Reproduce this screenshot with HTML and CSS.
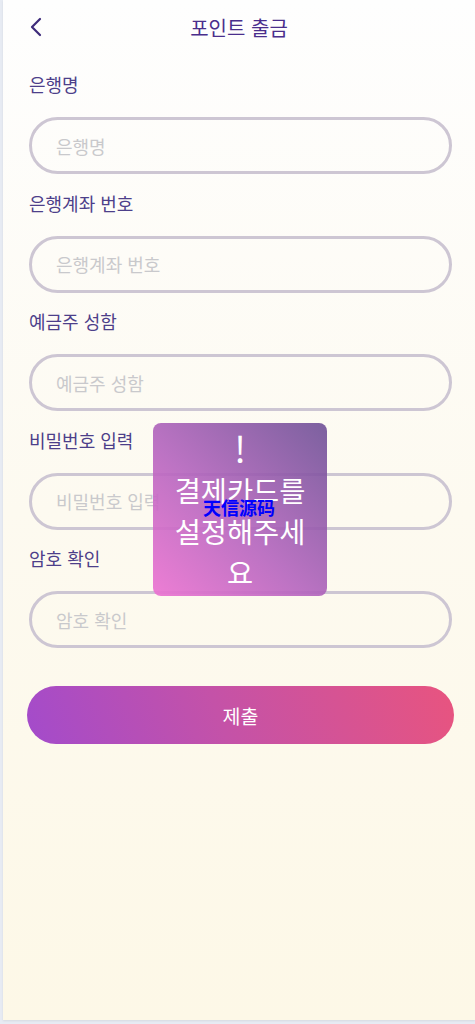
FILE: index.html
```html
<!DOCTYPE html>
<html lang="ko">
<head>
  <meta charset="UTF-8">
  <title>포인트 출금</title>
  <link rel="stylesheet" href="styles.css">
</head>
<body>
  <div class="page">
    <div class="header">
      <a class="back" href="#">
        <svg width="14" height="20" viewBox="0 0 14 20"><path d="M11 2 L3 10 L11 18" fill="none" stroke="#3d2a7a" stroke-width="2.2" stroke-linecap="round" stroke-linejoin="round"/></svg>
      </a>
      <h1>포인트 출금</h1>
    </div>

    <div class="form">
      <div class="field">
        <label>은행명</label>
        <input type="text" placeholder="은행명">
      </div>
      <div class="field">
        <label>은행계좌 번호</label>
        <input type="text" placeholder="은행계좌 번호">
      </div>
      <div class="field">
        <label>예금주 성함</label>
        <input type="text" placeholder="예금주 성함">
      </div>
      <div class="field">
        <label>비밀번호 입력</label>
        <input type="password" placeholder="비밀번호 입력">
      </div>
      <div class="field">
        <label>암호 확인</label>
        <input type="password" placeholder="암호 확인">
      </div>
      <button class="submit">제출</button>
    </div>

    <div class="toast">
      <div class="toast-icon">!</div>
      <div class="toast-text">결제카드를 설정해주세요</div>
    </div>
    <div class="mark">天信源码</div>
  </div>
</body>
</html>
```

FILE: styles.css
```css
body {
  margin: 0;
  padding: 0 0 4px 3px;
  background: #e7ebf3;
  font-family: "Noto Sans CJK KR", "Noto Sans", sans-serif;
}

.page {
  position: relative;
  min-height: 1020px;
  background: linear-gradient(to bottom, #fefefe 0%, #fdfaf0 50%, #fdf8e7 100%);
  box-shadow: 0 1px 2px rgba(0, 0, 0, 0.08);
}

.header {
  position: relative;
  height: 54px;
  display: flex;
  align-items: center;
  justify-content: center;
}

.header h1 {
  margin: 0;
  font-size: 20px;
  font-weight: 400;
  color: #4a2e8c;
}

.back {
  position: absolute;
  left: 26px;
  top: 17px;
  display: block;
  line-height: 0;
}

.form {
  padding: 18px 23px 0 26px;
}

.field {
  margin-bottom: 16.5px;
}

.field label {
  display: block;
  font-size: 18px;
  color: #4d3f8a;
  line-height: 24px;
  margin-bottom: 21px;
}

.field input {
  display: block;
  width: 100%;
  height: 57px;
  box-sizing: border-box;
  border: 3px solid #cdc6d3;
  border-radius: 30px;
  background: transparent;
  padding: 0 24px;
  font-family: inherit;
  font-size: 18px;
  color: #333;
  outline: none;
}

.field input::placeholder {
  color: #c9c9cc;
}

.submit {
  display: block;
  width: calc(100% + 4px);
  margin: 38px 0 0 -2px;
  height: 58px;
  border: none;
  border-radius: 29px;
  background: linear-gradient(70deg, #a34bcb 0%, #c452a8 45%, #e8547f 100%);
  color: #fff;
  font-family: inherit;
  font-size: 19.5px;
  cursor: pointer;
}

.toast {
  position: absolute;
  left: 150px;
  top: 423px;
  width: 174px;
  height: 173px;
  border-radius: 8px;
  background: linear-gradient(45deg, rgba(236, 115, 210, 0.92) 0%, rgba(180, 100, 190, 0.9) 45%, rgba(110, 80, 150, 0.9) 100%);
  color: #fff;
  text-align: center;
  box-sizing: border-box;
  padding: 0 12px;
}

.toast-icon {
  font-size: 36px;
  line-height: 44px;
  margin-top: 2px;
}

.toast-text {
  font-size: 28.4px;
  line-height: 41px;
  word-break: break-all;
}

.mark {
  position: absolute;
  left: 200px;
  top: 494px;
  color: #0000ff;
  font-size: 18px;
  font-weight: 700;
}
```
